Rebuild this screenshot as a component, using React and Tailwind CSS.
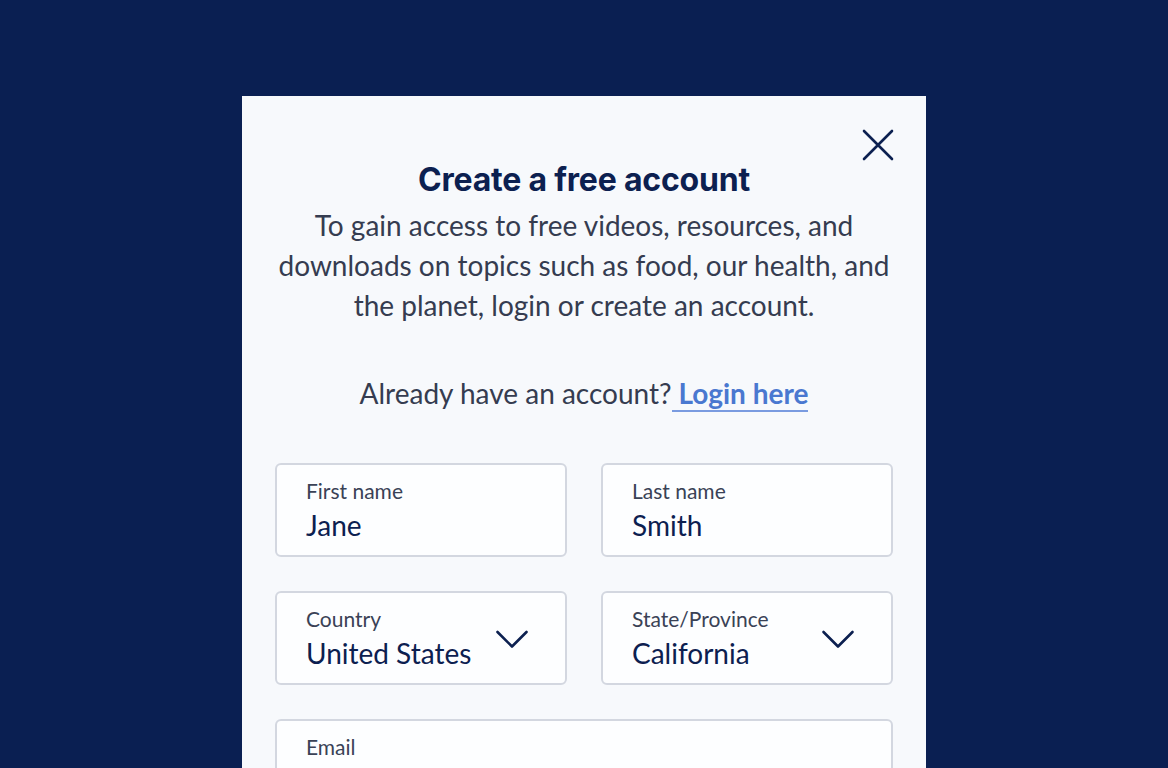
import React from "react";

function Chevron() {
  return (
    <svg width="34" height="20" viewBox="0 0 34 20" fill="none" className="shrink-0 self-center">
      <path d="M2.5 2 L17 16.5 L31.5 2" stroke="#0c2050" strokeWidth="2.6" strokeLinecap="round" strokeLinejoin="round" />
    </svg>
  );
}

function Field({ label, value, select }) {
  return (
    <div className="flex h-[94px] rounded-[6px] border-2 border-[#d3d7e0] bg-[#fdfeff] pl-[29px] pr-[36px] pt-[14px]">
      <div className="flex flex-1 flex-col">
        <span className="text-[21px] leading-[24px] text-[#3a4256]">{label}</span>
        {value !== undefined && (
          <span className="mt-[5px] text-[28px] leading-[34px] text-[#0c2050]">{value}</span>
        )}
      </div>
      {select && (
        <div className="-mt-[10px] flex items-center">
          <Chevron />
        </div>
      )}
    </div>
  );
}

export default function App() {
  return (
    <div
      className="flex h-[768px] w-full justify-center overflow-hidden bg-[#0a1f52] pt-[96px]"
      style={{ fontFamily: "Lato, 'Noto Sans', sans-serif" }}
    >
      <div className="relative w-[684px] bg-[#f7f9fc] px-[33px] pt-[65px]">
        <button className="absolute right-[31px] top-[32px] flex h-[34px] w-[34px] items-center justify-center" aria-label="Close">
          <svg width="34" height="34" viewBox="0 0 34 34" fill="none">
            <path d="M3 3 L31 31 M31 3 L3 31" stroke="#0c2050" strokeWidth="2.6" strokeLinecap="round" />
          </svg>
        </button>
        <h1
          className="text-center text-[32px] font-bold leading-[38px] tracking-[-0.2px] text-[#0c2050]"
          style={{ fontFamily: "Inter, Roboto, 'Liberation Sans', sans-serif" }}
        >
          Create a free account
        </h1>
        <p className="mt-[6px] text-center text-[28px] leading-[40px] text-[#353c50]">
          To gain access to free videos, resources, and
          <br />
          downloads on topics such as food, our health, and
          <br />
          the planet, login or create an account.
        </p>
        <p className="mt-[48px] text-center text-[28px] leading-[40px] text-[#353c50]">
          Already have an account?
          <a href="#" className="border-b-2 border-[#7a9be0] font-bold text-[#4a78d0]">
            {" "}Login here
          </a>
        </p>
        <div className="mt-[50px] grid grid-cols-2 gap-x-[34px] gap-y-[34px]">
          <Field label="First name" value="Jane" />
          <Field label="Last name" value="Smith" />
          <Field label="Country" value="United States" select />
          <Field label="State/Province" value="California" select />
          <div className="col-span-2 flex h-[94px] rounded-[6px] border-2 border-[#d3d7e0] bg-[#fdfeff] pl-[29px] pt-[14px]">
            <span className="text-[21px] leading-[24px] text-[#3a4256]">Email</span>
          </div>
        </div>
      </div>
    </div>
  );
}
